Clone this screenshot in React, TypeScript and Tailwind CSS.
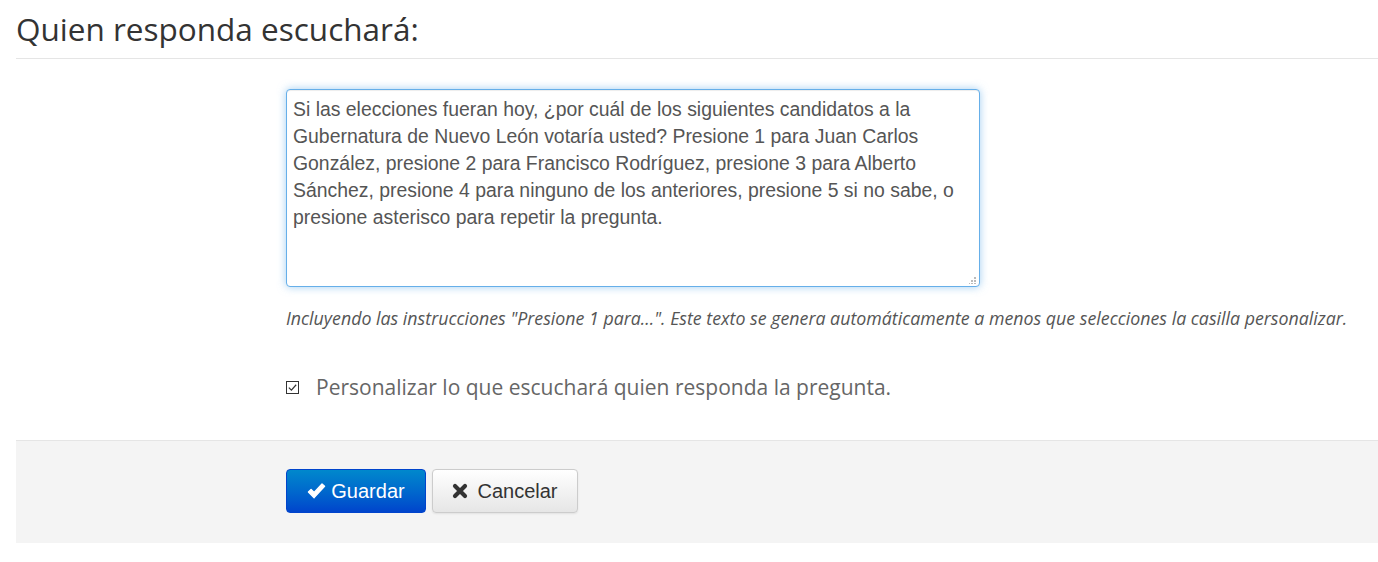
import React from "react";

const QUESTION =
  "Si las elecciones fueran hoy, ¿por cuál de los siguientes candidatos a la Gubernatura de Nuevo León votaría usted? Presione 1 para Juan Carlos González, presione 2 para Francisco Rodríguez, presione 3 para Alberto Sánchez, presione 4 para ninguno de los anteriores, presione 5 si no sabe, o presione asterisco para repetir la pregunta.";

export default function App() {
  return (
    <div className="min-h-[562px] bg-white pl-4 font-['Open_Sans',sans-serif] text-[#333]">
      {/* Heading */}
      <h2 className="pt-[9px] pb-[10px] text-[31.5px] leading-[39px] font-normal border-b border-[#e5e5e5]">
        Quien responda escuchará:
      </h2>

      {/* Form body */}
      <div className="pl-[270px] pt-[30px] pb-[38px]">
        <div className="relative w-[694px]">
          <textarea
            readOnly
            defaultValue={QUESTION}
            className="block w-[694px] h-[198px] resize-none px-[6px] pt-[6px] pb-[5px] rounded-[4px] border border-[#66afe9] bg-white font-['Liberation_Sans',Arial,sans-serif] text-[19.4px] leading-[27px] text-[#555] outline-none shadow-[inset_0_1px_1px_rgba(0,0,0,0.075),0_0_8px_rgba(102,175,233,0.6)]"
          />
          {/* resize grip */}
          <svg viewBox="0 0 8 8" className="absolute right-[3px] bottom-[3px] h-[8px] w-[8px]">
            <rect x="5" y="1" width="2" height="2" fill="#bbb" />
            <rect x="2" y="4" width="2" height="2" fill="#bbb" />
            <rect x="5" y="4" width="2" height="2" fill="#bbb" />
            <rect x="-1" y="7" width="2" height="2" fill="#bbb" />
            <rect x="2" y="7" width="2" height="2" fill="#bbb" />
            <rect x="5" y="7" width="2" height="2" fill="#bbb" />
          </svg>
        </div>

        <p className="mt-[19px] text-[17.8px] leading-[24px] italic text-[#555]">
          Incluyendo las instrucciones "Presione 1 para...". Este texto se genera automáticamente a menos que selecciones la casilla personalizar.
        </p>

        <label className="mt-[43px] flex items-center gap-[17px] text-[21px] leading-[29px] text-[#666]">
          <span className="flex h-[13px] w-[13px] items-center justify-center border border-[#333] bg-white">
            <svg viewBox="0 0 12 12" className="h-[11px] w-[11px]">
              <path d="M2 6.2 L4.8 9 L10 3" fill="none" stroke="#333" strokeWidth="1.3" />
            </svg>
          </span>
          Personalizar lo que escuchará quien responda la pregunta.
        </label>
      </div>

      {/* Footer actions */}
      <div className="flex gap-[6px] border-t border-[#e5e5e5] bg-[#f4f4f4] pl-[270px] pt-[28px] pb-[30px] font-['Liberation_Sans',Arial,sans-serif]">
        <button className="flex h-[44px] w-[140px] items-center justify-center gap-[5px] rounded-[4px] border border-[#0044cc] bg-gradient-to-b from-[#0088cc] to-[#0044cc] text-[20px] text-white">
          <svg viewBox="0 0 20 20" className="h-[19px] w-[19px]">
            <path d="M1.5 10.5 L7.5 16.5 L18.5 4.5 L15.8 2 L7.5 11 L4.3 7.8 Z" fill="white" strokeLinejoin="round" stroke="white" strokeWidth="1.4" />
          </svg>
          Guardar
        </button>
        <button className="flex h-[44px] w-[146px] items-center justify-center gap-[9px] rounded-[4px] border border-[#ccc] bg-gradient-to-b from-white to-[#e6e6e6] text-[20px] text-[#333] shadow-[0_1px_2px_rgba(0,0,0,0.08)]">
          <svg viewBox="0 0 16 16" className="h-[16px] w-[16px]">
            <path d="M3 3 L13 13 M13 3 L3 13" stroke="#333" strokeWidth="4.2" strokeLinecap="round" />
          </svg>
          Cancelar
        </button>
      </div>
    </div>
  );
}
